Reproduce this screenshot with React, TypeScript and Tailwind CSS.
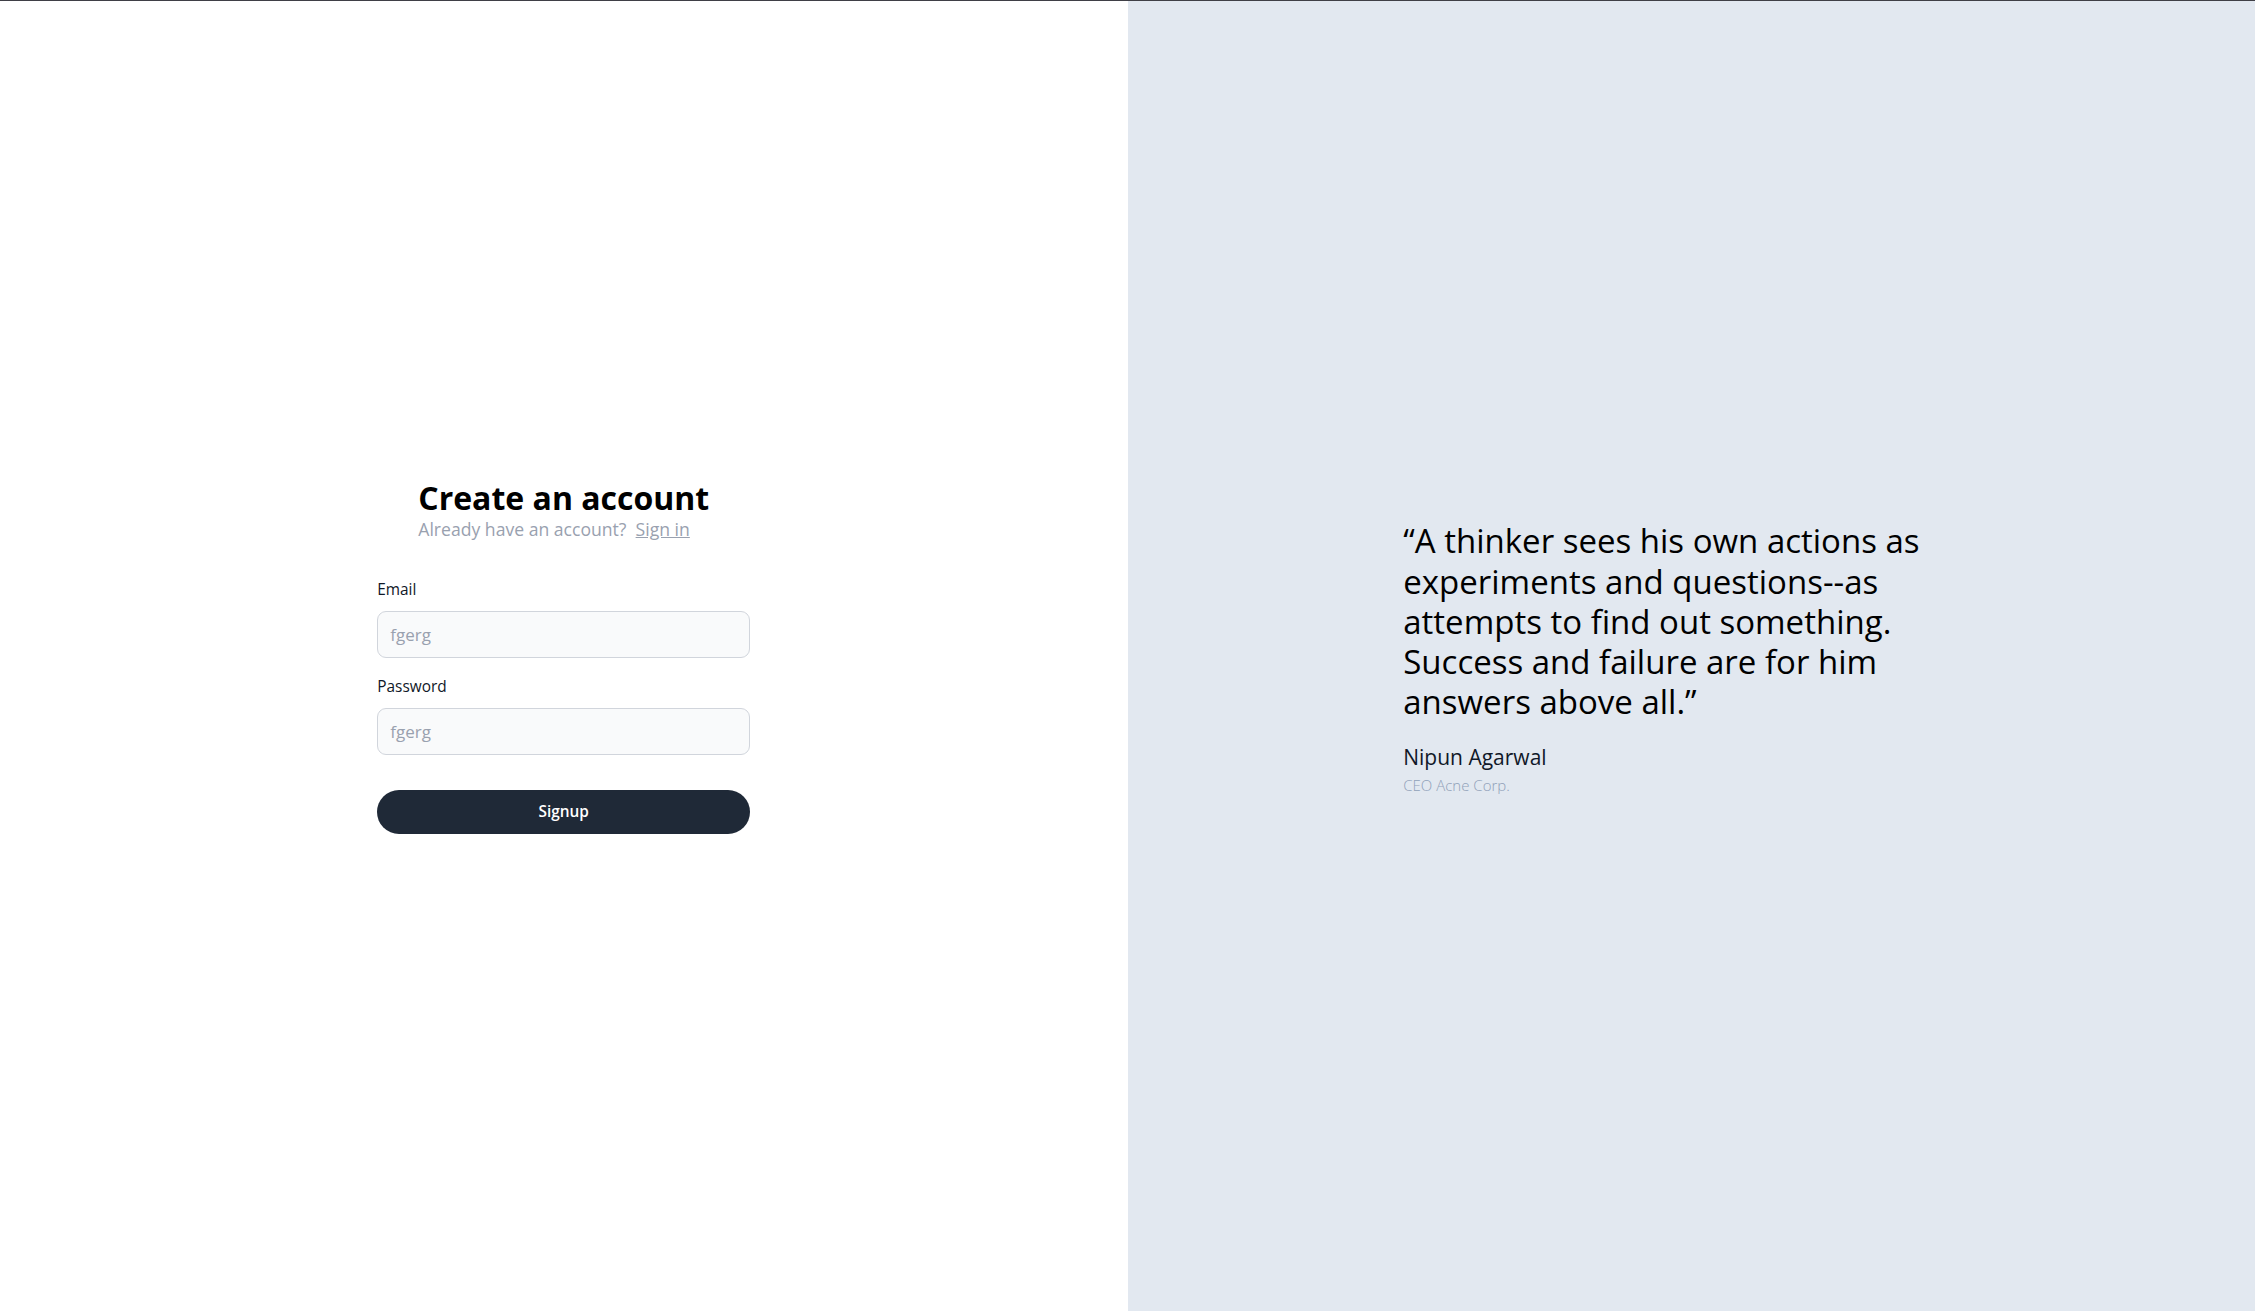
import React from 'react';

const font = "font-['Open_Sans','Noto_Sans',sans-serif]";

const Field: React.FC<{ label: string; type?: string; first?: boolean }> = ({ label, type = 'text', first }) => (
  <div className={first ? 'flex flex-col' : 'mt-[18px] flex flex-col'}>
    <label className="text-[15.4px] leading-[22px] font-medium text-gray-900">{label}</label>
    <input
      type={type}
      placeholder="fgerg"
      className="mt-[10px] h-[47px] w-full rounded-[9px] border border-gray-300 bg-gray-50 px-[12px] text-[17px] text-gray-900 outline-none placeholder:text-gray-400"
    />
  </div>
);

const App: React.FC = () => {
  return (
    <div className={`grid h-screen grid-cols-2 border-t border-[#3f3f46] ${font}`}>
      {/* left: signup form */}
      <div className="flex items-center justify-center bg-white">
        <div className="w-[373px]">
          <div className="flex justify-center">
            <div>
              <h1 className="text-[32px] leading-[37px] font-bold text-black">Create an account</h1>
              <p className="text-[17.6px] leading-[26px] text-gray-400">
                Already have an account?&nbsp;{' '}
                <a href="#" className="underline">Sign in</a>
              </p>
            </div>
          </div>

          <form className="mt-[37px] flex flex-col" onSubmit={(e) => e.preventDefault()}>
            <Field label="Email" first />
            <Field label="Password" type="password" />
            <button
              type="submit"
              className="mt-[35px] h-[44px] w-full rounded-full bg-[#1f2937] text-[15.4px] font-semibold text-white"
            >
              Signup
            </button>
          </form>
        </div>
      </div>

      {/* right: quote */}
      <div className="flex items-center justify-center bg-[#e2e8f0]">
        <div className="w-[576px] pt-[4px]">
          <p className="max-w-[540px] text-[33px] leading-[40.3px] font-medium text-black">
            “A thinker sees his own actions as experiments and questions--as attempts to find out something. Success and failure are for him answers above all.”
          </p>
          <p className="mt-[20px] text-[21px] leading-[28px] text-gray-900">Nipun Agarwal</p>
          <p className="mt-[4px] text-[15px] leading-[20px] font-light text-slate-400">CEO Acne Corp.</p>
        </div>
      </div>
    </div>
  );
};

export default App;
